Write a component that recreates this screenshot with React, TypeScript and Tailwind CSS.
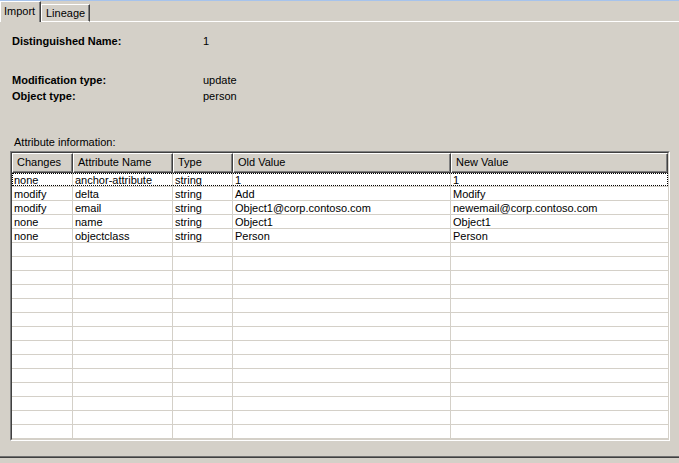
import React from "react";

const rows: string[][] = [
  ["none", "anchor-attribute", "string", "1", "1"],
  ["modify", "delta", "string", "Add", "Modify"],
  ["modify", "email", "string", "Object1@corp.contoso.com", "newemail@corp.contoso.com"],
  ["none", "name", "string", "Object1", "Object1"],
  ["none", "objectclass", "string", "Person", "Person"],
];

const headers = ["Changes", "Attribute Name", "Type", "Old Value", "New Value"];
const widths = ["w-[61px]", "w-[100px]", "w-[60px]", "w-[218px]", "w-[217px]"];
const TOTAL_ROWS = 19;

const InfoRow = ({ label, value, className = "" }: { label: string; value: string; className?: string }) => (
  <div className={`flex pl-[2px] ${className}`}>
    <span className="w-[191px] font-bold">{label}</span>
    <span>{value}</span>
  </div>
);

export default function App() {
  const allRows = Array.from({ length: TOTAL_ROWS }, (_, i) => rows[i] ?? ["", "", "", "", ""]);

  return (
    <div className="w-[679px] h-[463px] flex flex-col bg-[#d4d0c8] text-[11px] leading-[13px] text-black font-['Liberation_Sans',Arial,sans-serif] overflow-hidden">
      <div className="h-px shrink-0 bg-[#a6c3ec]" />

      {/* tabs */}
      <div className="flex items-end h-[21px] shrink-0">
        <div className="h-[21px] w-[41px] border-t border-l border-t-white border-l-white border-r border-r-[#404040] shadow-[inset_-1px_0_0_#808080] pl-[3px] pt-[3px]">
          Import
        </div>
        <div className="h-[18px] w-[49px] border-t border-l border-b border-t-white border-l-white border-b-white border-r border-r-[#404040] shadow-[inset_-1px_0_0_#808080] pl-[4px] pt-[2px]">
          Lineage
        </div>
        <div className="flex-1 border-b border-white" />
      </div>

      {/* panel */}
      <div className="flex-1 flex flex-col pl-[10px] pt-[13px]">
        <InfoRow label="Distinguished Name:" value="1" />
        <InfoRow label="Modification type:" value="update" className="mt-[26px]" />
        <InfoRow label="Object type:" value="person" className="mt-[3px]" />

        <div className="mt-[33px] pl-[4px]">Attribute information:</div>

        <div className="mt-[2px] w-[660px] border border-t-[#808080] border-l-[#808080] border-r-white border-b-white">
          <div className="border border-t-[#404040] border-l-[#404040] border-r-[#d4d0c8] border-b-[#d4d0c8] bg-white">
            <div className="flex h-[20px] bg-[#d4d0c8]">
              {headers.map((h, i) => (
                <div
                  key={h}
                  className={`${widths[i]} h-[20px] border border-t-white border-l-white border-r-[#404040] border-b-[#404040] shadow-[inset_-1px_-1px_0_#808080] pl-[4px] pt-[2px] whitespace-nowrap`}
                >
                  {h}
                </div>
              ))}
            </div>
            {allRows.map((r, ri) => (
              <div key={ri} className="relative flex h-[14px] border-b border-[#d4d0c8]">
                {r.map((c, ci) => (
                  <div
                    key={ci}
                    className={`${widths[ci]} h-[13px] pl-[2px] pt-[1px] text-black whitespace-nowrap overflow-hidden ${ci < 4 ? "border-r border-[#d4d0c8]" : ""}`}
                  >
                    {c}
                  </div>
                ))}
                {ri === 0 && <div className="absolute inset-0 border border-dotted border-black pointer-events-none" />}
              </div>
            ))}
          </div>
        </div>
      </div>

      <div className="h-px shrink-0 bg-[#707070]" />
      <div className="h-px shrink-0 bg-[#404040]" />
      <div className="h-[5px] shrink-0 bg-[#d4d0c8]" />
    </div>
  );
}
